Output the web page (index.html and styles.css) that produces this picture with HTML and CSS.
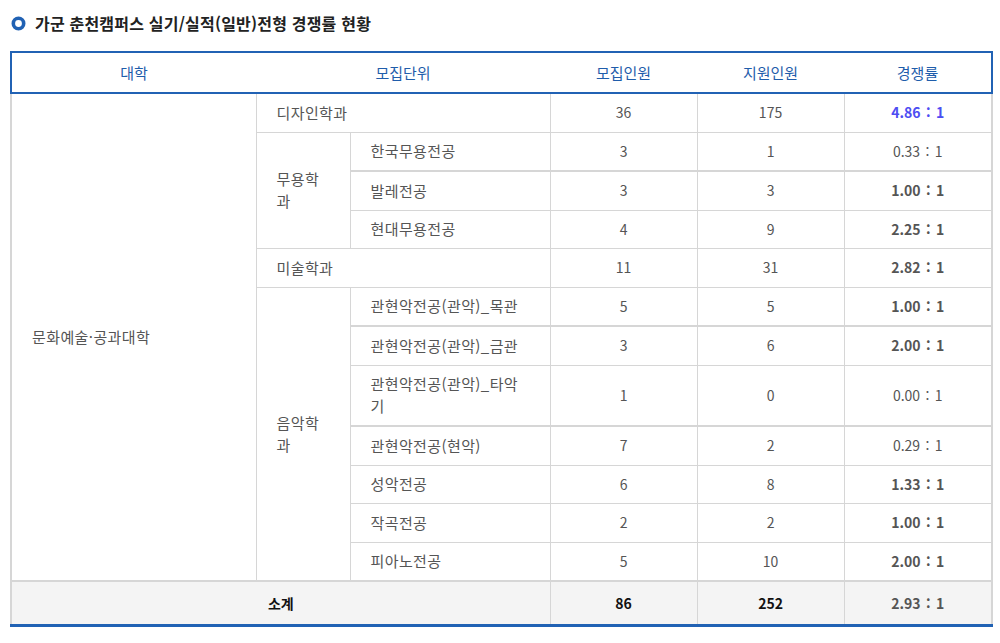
FILE: index.html
```html
<!DOCTYPE html>
<html lang="ko">
<head>
<meta charset="utf-8">
<title>경쟁률 현황</title>
<link rel="stylesheet" href="styles.css">
</head>
<body>
<div class="page">
  <h2 class="title">
    <svg class="bullet" width="15" height="15" viewBox="0 0 15 15"><circle cx="7.5" cy="7.5" r="5.2" fill="#fff" stroke="#2162b4" stroke-width="3.6"/></svg>
    <span>가군 춘천캠퍼스 실기/실적(일반)전형 경쟁률 현황</span>
  </h2>
  <table class="rate">
    <colgroup>
      <col class="c1"><col class="c2"><col class="c3"><col class="c4"><col class="c5"><col class="c6">
    </colgroup>
    <thead>
      <tr>
        <th class="first">대학</th>
        <th colspan="2">모집단위</th>
        <th>모집인원</th>
        <th>지원인원</th>
        <th class="last">경쟁률</th>
      </tr>
    </thead>
    <tbody>
      <tr>
        <td rowspan="13" class="left first">문화예술·공과대학</td>
        <td colspan="2" class="left">디자인학과</td>
        <td>36</td><td>175</td><td class="last hi">4.86 : 1</td>
      </tr>
      <tr>
        <td rowspan="3" class="left">무용학과</td>
        <td class="left">한국무용전공</td>
        <td>3</td><td>1</td><td class="last">0.33 : 1</td>
      </tr>
      <tr class="thick">
        <td class="left">발레전공</td>
        <td>3</td><td>3</td><td class="last b">1.00 : 1</td>
      </tr>
      <tr>
        <td class="left">현대무용전공</td>
        <td>4</td><td>9</td><td class="last b">2.25 : 1</td>
      </tr>
      <tr>
        <td colspan="2" class="left">미술학과</td>
        <td>11</td><td>31</td><td class="last b">2.82 : 1</td>
      </tr>
      <tr>
        <td rowspan="7" class="left">음악학과</td>
        <td class="left">관현악전공(관악)_목관</td>
        <td>5</td><td>5</td><td class="last b">1.00 : 1</td>
      </tr>
      <tr class="thick">
        <td class="left">관현악전공(관악)_금관</td>
        <td>3</td><td>6</td><td class="last b">2.00 : 1</td>
      </tr>
      <tr>
        <td class="left">관현악전공(관악)_타악<br>기</td>
        <td>1</td><td>0</td><td class="last">0.00 : 1</td>
      </tr>
      <tr class="thick">
        <td class="left">관현악전공(현악)</td>
        <td>7</td><td>2</td><td class="last">0.29 : 1</td>
      </tr>
      <tr>
        <td class="left">성악전공</td>
        <td>6</td><td>8</td><td class="last b">1.33 : 1</td>
      </tr>
      <tr>
        <td class="left">작곡전공</td>
        <td>2</td><td>2</td><td class="last b">1.00 : 1</td>
      </tr>
      <tr>
        <td class="left">피아노전공</td>
        <td>5</td><td>10</td><td class="last b">2.00 : 1</td>
      </tr>
    </tbody>
    <tfoot>
      <tr>
        <td colspan="3" class="first strong">소계</td>
        <td class="strong">86</td>
        <td class="strong">252</td>
        <td class="last b">2.93 : 1</td>
      </tr>
    </tfoot>
  </table>
</div>
</body>
</html>
```
FILE: styles.css
```css
html, body {
  margin: 0;
  padding: 0;
  background: #fff;
}
body {
  font-family: "Noto Sans CJK KR", "Noto Sans", sans-serif;
  color: #555;
}
.page {
  padding: 12px 9px 0 10px;
}
.title {
  display: flex;
  align-items: center;
  gap: 9px;
  margin: 0 0 17px 0;
  font-size: 16px;
  letter-spacing: 0.2px;
  font-weight: bold;
  line-height: 22px;
  color: #222;
}
.bullet {
  flex: none;
  margin-left: 1px;
}
.rate {
  border-collapse: collapse;
  width: 981px;
  table-layout: fixed;
  font-size: 14px;
}
.c1 { width: 245px; }
.c2 { width: 94px; }
.c3 { width: 200px; }
.c4 { width: 147px; }
.c5 { width: 147px; }
.c6 { width: 148px; }
.rate th {
  font-weight: normal;
  font-size: 15px;
  color: #1f5dab;
  line-height: 23px;
  padding: 8px 10px;
  border-top: 2px solid #2162b4;
  border-bottom: 2px solid #2162b4;
  text-align: center;
}
.rate th.first { border-left: 2px solid #2162b4; }
.rate th.last { border-right: 2px solid #2162b4; }
.rate td {
  border: 1px solid #d6d6d6;
  padding: 8px 20px;
  line-height: 21.5px;
  text-align: center;
  vertical-align: middle;
}
.rate td.left {
  text-align: left;
  font-size: 15px;
  letter-spacing: 0.4px;
  line-height: 22px;
  padding-top: 7.75px;
  padding-bottom: 7.75px;
}
.rate td.first { border-left: 2px solid #d6d6d6; }
.rate td.last {
  border-right: 2px solid #d6d6d6;
  word-spacing: 1.5px;
}
.rate tr.thick td { border-top: 2px solid #d6d6d6; }
.rate td.b { font-weight: bold; }
.rate td.hi { font-weight: bold; color: #4d4df2; }
.rate tfoot td {
  background: #f4f4f4;
  border-top: 2px solid #d6d6d6;
  border-bottom: 3px solid #2162b4;
  padding: 9.5px 20px 10px;
  line-height: 22px;
}
.rate td.strong {
  font-weight: bold;
  color: #111;
}
```
